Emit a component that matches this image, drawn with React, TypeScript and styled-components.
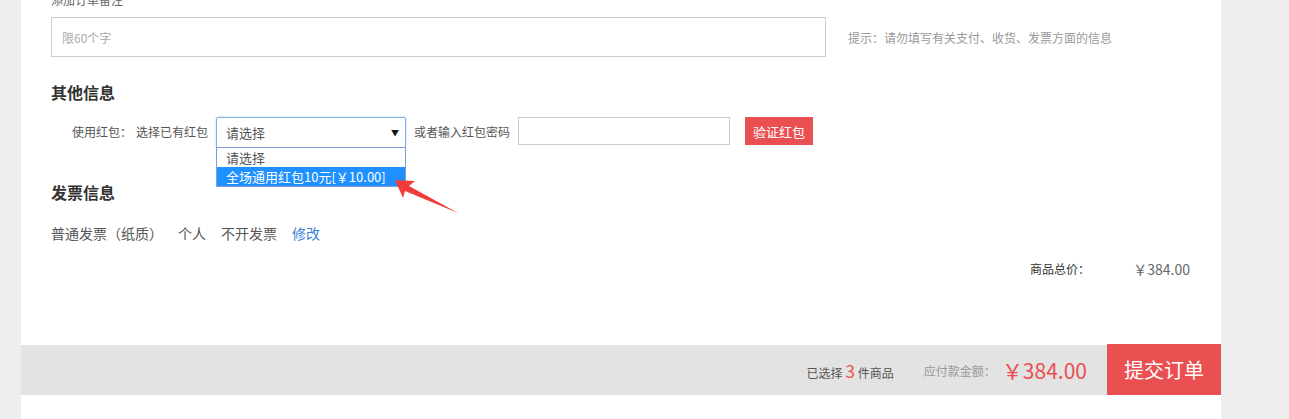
import styled, {createGlobalStyle} from 'styled-components';

const GlobalStyle = createGlobalStyle`
  html, body {
    margin: 0;
    padding: 0;
    background: #eeeeee;
    font-family: "Noto Sans CJK SC", "Noto Sans", sans-serif;
    color: #555;
  }
`;

const red = '#ea5051';

const Page = styled.div`
  width: 1200px;
  height: 419px;
  margin-left: 21px;
  background: #fff;
  overflow: hidden;
`;

const Content = styled.div`
  padding: 0 31px 0 30px;
`;

const FieldLabel = styled.div`
  margin-top: -8px;
  font-size: 12px;
  line-height: 16px;
  color: #666;
`;

const RemarkRow = styled.div`
  display: flex;
  align-items: center;
  margin-top: 9px;
`;

const RemarkInput = styled.div`
  box-sizing: border-box;
  width: 775px;
  height: 40px;
  border: 1px solid #cccccc;
  padding-left: 10px;
  display: flex;
  align-items: center;
  font-size: 12px;
  color: #aaa;
`;

const Hint = styled.span`
  margin-left: 22px;
  font-size: 12px;
  color: #999;
`;

const Heading = styled.h3<{$top: number}>`
  margin: ${p => p.$top}px 0 0;
  font-size: 16px;
  line-height: 20px;
  font-weight: bold;
  color: #333;
`;

const PacketRow = styled.div`
  position: relative;
  display: flex;
  align-items: flex-start;
  margin-top: 15px;
  padding-left: 21px;
  font-size: 12px;
  color: #555;
`;

const RowText = styled.span<{$gap?: number}>`
  line-height: 29px;
  margin-left: ${p => p.$gap ?? 0}px;
`;

const SelectWrap = styled.div`
  position: relative;
  margin-left: 8px;
  width: 190px;
`;

const SelectBox = styled.div`
  box-sizing: border-box;
  height: 31px;
  border: 1px solid #86aee6;
  border-radius: 2px;
  display: flex;
  align-items: center;
  justify-content: space-between;
  padding: 0 6px 0 9px;
  font-size: 13px;
  color: #555;
  box-shadow: 0 0 2px rgba(100, 150, 230, 0.5);
`;

const Caret = styled.span`
  font-size: 8px;
  color: #111;
`;

const OptionList = styled.ul`
  position: absolute;
  top: 30px;
  left: 0;
  box-sizing: border-box;
  width: 190px;
  margin: 0;
  padding: 0;
  list-style: none;
  border: 1px solid #7b9fd6;
  background: #fff;
  z-index: 2;
`;

const Option = styled.li<{$active?: boolean}>`
  height: 19px;
  line-height: 19px;
  padding-left: 9px;
  font-size: 13px;
  color: ${p => (p.$active ? '#fff' : '#555')};
  background: ${p => (p.$active ? '#1e90ff' : '#fff')};
`;

const CodeInput = styled.div`
  box-sizing: border-box;
  width: 212px;
  height: 28px;
  margin-left: 8px;
  border: 1px solid #cccccc;
`;

const VerifyButton = styled.button`
  height: 28px;
  width: 68px;
  margin-left: 15px;
  border: none;
  background: ${red};
  color: #fff;
  font-family: inherit;
  font-size: 13px;
  padding: 0;
`;

const Pointer = styled.svg`
  position: absolute;
  left: 339px;
  top: 55px;
  z-index: 3;
`;

const InvoiceRow = styled.div`
  display: flex;
  margin-top: 21px;
  font-size: 14px;
  line-height: 20px;
  color: #555;
`;

const InvoiceItem = styled.span<{$gap: number; $link?: boolean}>`
  margin-left: ${p => p.$gap}px;
  color: ${p => (p.$link ? '#3b7fd6' : '#555')};
`;

const TotalRow = styled.div`
  display: flex;
  justify-content: flex-end;
  align-items: center;
  margin-top: 16px;
  line-height: 20px;
`;

const TotalLabel = styled.span`
  font-size: 12px;
  color: #333;
`;

const TotalPrice = styled.span`
  width: 100px;
  text-align: right;
  font-size: 14px;
  color: #666;
`;

const Bar = styled.div`
  display: flex;
  align-items: center;
  justify-content: flex-end;
  height: 50px;
  margin-top: 66px;
  background: #e3e3e3;
  font-size: 12px;
  color: #555;
`;

const Count = styled.span`
  color: ${red};
  font-size: 17px;
  margin: 0 3px;
`;

const PayLabel = styled.span`
  margin-left: 30px;
  color: #999;
`;

const PayAmount = styled.span`
  margin: 0 20px 0 6px;
  font-size: 21px;
  color: ${red};
`;

const SubmitButton = styled.button`
  align-self: flex-start;
  width: 114px;
  height: 51px;
  margin-top: -1px;
  border: none;
  padding: 0;
  background: ${red};
  color: #fff;
  font-family: inherit;
  font-size: 20px;
`;

export default function App() {
    return (
        <>
            <GlobalStyle />
            <Page>
                <Content>
                    <FieldLabel>添加订单备注</FieldLabel>
                    <RemarkRow>
                        <RemarkInput>限60个字</RemarkInput>
                        <Hint>提示：请勿填写有关支付、收货、发票方面的信息</Hint>
                    </RemarkRow>

                    <Heading $top={25}>其他信息</Heading>
                    <PacketRow>
                        <RowText>使用红包：</RowText>
                        <RowText $gap={4}>选择已有红包</RowText>
                        <SelectWrap>
                            <SelectBox>请选择<Caret>▼</Caret></SelectBox>
                            <OptionList>
                                <Option>请选择</Option>
                                <Option $active>全场通用红包10元[￥10.00]</Option>
                            </OptionList>
                        </SelectWrap>
                        <RowText $gap={8}>或者输入红包密码</RowText>
                        <CodeInput />
                        <VerifyButton>验证红包</VerifyButton>
                        <Pointer width="72" height="45" viewBox="0 0 72 45">
                            <polygon points="5,8 25,9 19,14 68,41 15,19 13,26" fill="#f23b3b" />
                        </Pointer>
                    </PacketRow>

                    <Heading $top={34}>发票信息</Heading>
                    <InvoiceRow>
                        <InvoiceItem $gap={0}>普通发票（纸质）</InvoiceItem>
                        <InvoiceItem $gap={15}>个人</InvoiceItem>
                        <InvoiceItem $gap={15}>不开发票</InvoiceItem>
                        <InvoiceItem $gap={15} $link>修改</InvoiceItem>
                    </InvoiceRow>

                    <TotalRow>
                        <TotalLabel>商品总价：</TotalLabel>
                        <TotalPrice>￥384.00</TotalPrice>
                    </TotalRow>
                </Content>

                <Bar>
                    <span>已选择<Count>3</Count>件商品</span>
                    <PayLabel>应付款金额：</PayLabel>
                    <PayAmount>￥384.00</PayAmount>
                    <SubmitButton>提交订单</SubmitButton>
                </Bar>
            </Page>
        </>
    );
}
